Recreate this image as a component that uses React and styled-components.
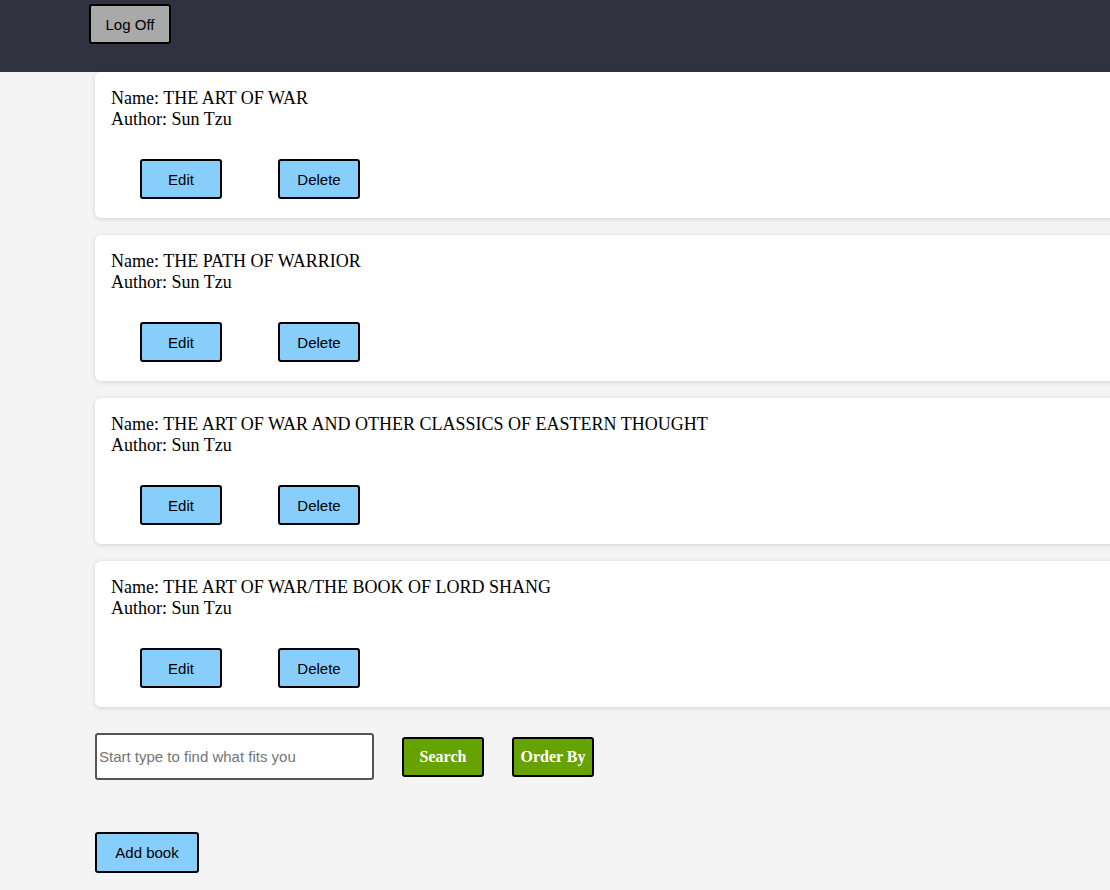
import React, { useState } from 'react'
import styled, { createGlobalStyle } from 'styled-components'

const GlobalStyle = createGlobalStyle`
  body {
    margin: 0;
    background: #f4f4f4;
    font-family: "Liberation Serif", "Times New Roman", serif;
    overflow-x: hidden;
  }
`

const Header = styled.div`
  height: 72px;
  background: #30323f;
  padding-left: 89px;
  box-sizing: border-box;
  padding-top: 4px;
`

const Button = styled.button`
  width: ${(props) => props.width || 82}px;
  height: ${(props) => props.height || 40}px;
  background: ${(props) => props.bg || '#87cefa'};
  color: ${(props) => props.color || '#000'};
  border: 2px solid #000;
  border-radius: 3px;
  font-family: ${(props) => (props.serif ? '"Liberation Serif", serif' : '"Liberation Sans", Arial, sans-serif')};
  font-weight: ${(props) => (props.bold ? 700 : 400)};
  font-size: ${(props) => (props.serif ? 16 : 15)}px;
  padding: 0;
  cursor: pointer;
`

const Container = styled.div`
  margin-left: 95px;
  margin-right: -20px;
`

const Card = styled.div`
  background: #fff;
  border-radius: 6px;
  box-shadow: 0 1px 5px rgba(0, 0, 0, 0.14);
  padding: 16px 16px 19px 16px;
  margin-bottom: 17px;
`

const Line = styled.div`
  font-size: 18px;
  line-height: 21px;
  color: #000;
`

const Actions = styled.div`
  display: flex;
  gap: 56px;
  margin: 29px 0 0 29px;
`

const SearchRow = styled.div`
  display: flex;
  align-items: center;
  gap: 28px;
  margin-top: 26px;
`

const Input = styled.input`
  width: 279px;
  height: 47px;
  box-sizing: border-box;
  border: 2px solid #555;
  border-radius: 3px;
  padding: 0 2px;
  font-family: "Liberation Sans", Arial, sans-serif;
  font-size: 15px;
  background: #fff;
  &::placeholder {
    color: #757575;
  }
`

const AddRow = styled.div`
  margin-top: 52px;
  padding-bottom: 17px;
`

const books = [
  { name: 'THE ART OF WAR', author: 'Sun Tzu' },
  { name: 'THE PATH OF WARRIOR', author: 'Sun Tzu' },
  { name: 'THE ART OF WAR AND OTHER CLASSICS OF EASTERN THOUGHT', author: 'Sun Tzu' },
  { name: 'THE ART OF WAR/THE BOOK OF LORD SHANG', author: 'Sun Tzu' },
]

const App = () => {
  const [query, setQuery] = useState('')

  return (
    <>
      <GlobalStyle />
      <Header>
        <Button bg="#a9a9a9">Log Off</Button>
      </Header>
      <Container>
        {books.map((book) => (
          <Card key={book.name}>
            <Line>Name: {book.name}</Line>
            <Line>Author: {book.author}</Line>
            <Actions>
              <Button>Edit</Button>
              <Button>Delete</Button>
            </Actions>
          </Card>
        ))}
        <SearchRow>
          <Input
            placeholder="Start type to find what fits you"
            value={query}
            onChange={(event) => setQuery(event.target.value)}
          />
          <Button bg="#66a200" color="#fff" serif bold>Search</Button>
          <Button bg="#66a200" color="#fff" serif bold>Order By</Button>
        </SearchRow>
        <AddRow>
          <Button width={104} height={41}>Add book</Button>
        </AddRow>
      </Container>
    </>
  )
}

export default App
